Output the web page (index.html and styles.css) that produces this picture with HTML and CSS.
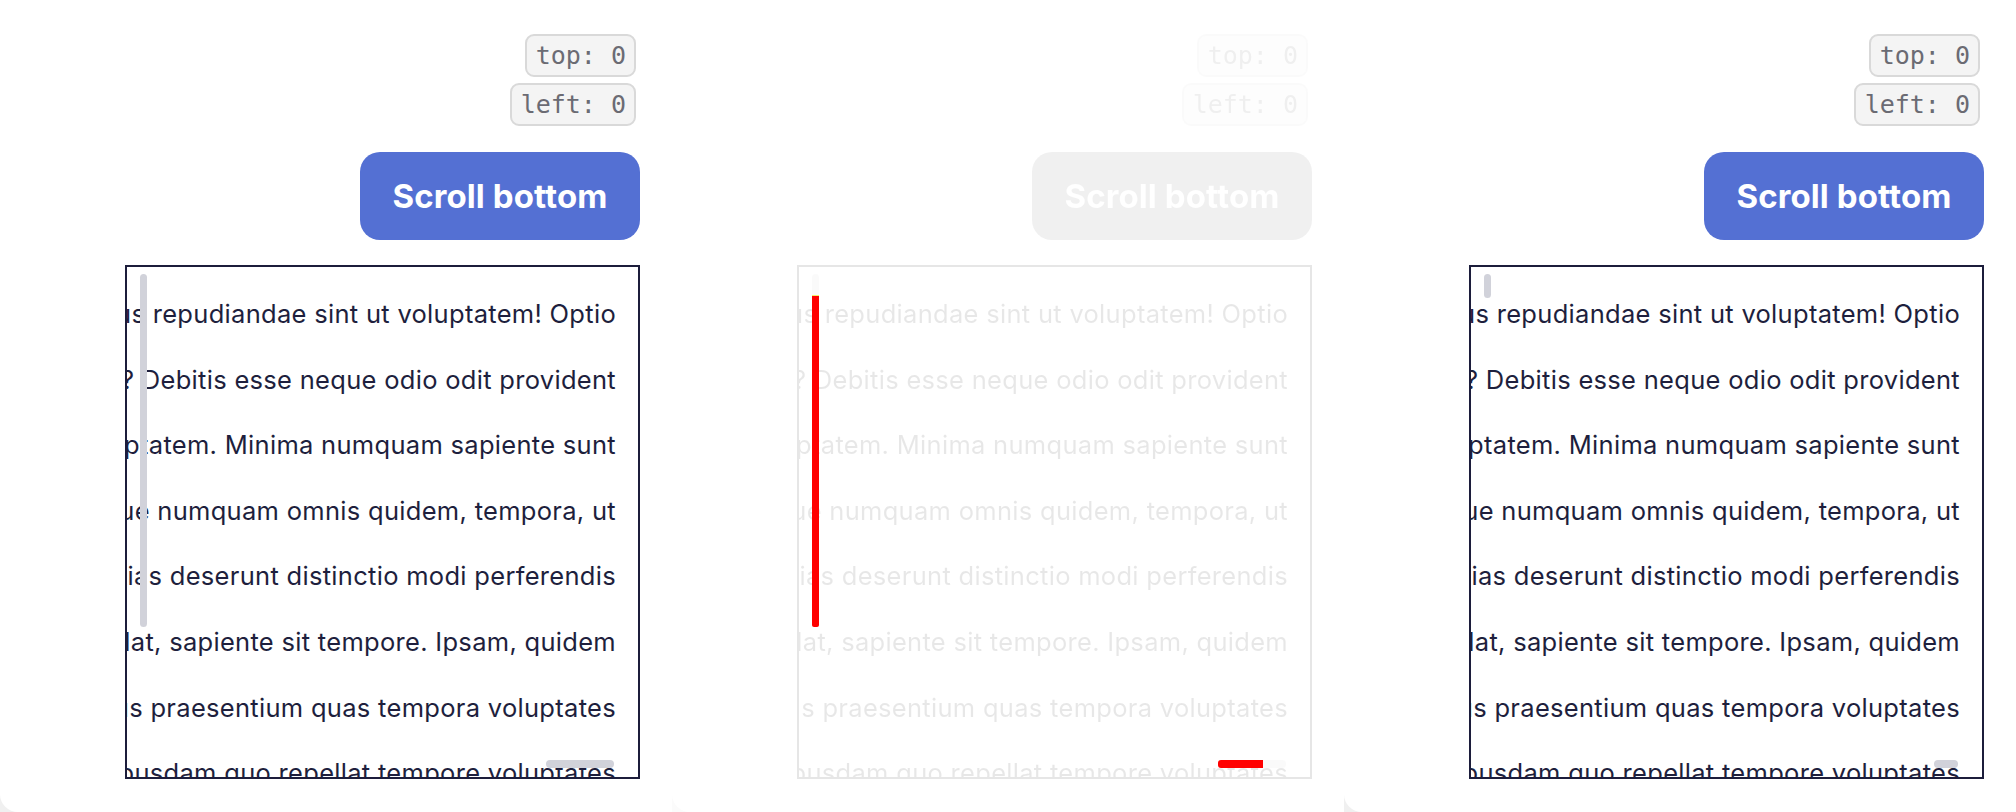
FILE: index.html
```html
<!DOCTYPE html>
<html>
<head>
<meta charset="utf-8">
<link rel="stylesheet" href="styles.css">
</head>
<body>
<main class="row">
  <div class="slot">
    <section class="card">
      <div class="badges">
        <span class="badge">top: 0</span>
        <span class="badge">left: 0</span>
      </div>
      <button class="btn">Scroll bottom</button>
      <div class="box">
        <div class="content">
          <div class="line"><span>Lorem ipsum dolor sit amet consectetur adipisicing elit. Quibusdam accusamus repudiandae sint ut voluptatem! Optio</span></div>
          <div class="line"><span>Nesciunt ratione tempora voluptatem ipsa quos? Debitis esse neque odio odit provident</span></div>
          <div class="line"><span>Eveniet facilis quod in officia aliquam voluptatem. Minima numquam sapiente sunt</span></div>
          <div class="line"><span>Aliquid quisquam ea atque numquam omnis quidem, tempora, ut</span></div>
          <div class="line"><span>Quasi dolorem molestias deserunt distinctio modi perferendis</span></div>
          <div class="line"><span>Nulla excepturi repellat, sapiente sit tempore. Ipsam, quidem</span></div>
          <div class="line"><span>Magnam voluptatibus praesentium quas tempora voluptates</span></div>
          <div class="line"><span>Iure nihil accusamus quibusdam quo repellat tempore voluptates</span></div>
        </div>
        <div class="thumb-v long"></div>
        <div class="thumb-h long"></div>
      </div>
    </section>
  </div>

  <div class="slot ghost-slot">
    <section class="card ghost">
      <div class="badges">
        <span class="badge">top: 0</span>
        <span class="badge">left: 0</span>
      </div>
      <button class="btn">Scroll bottom</button>
      <div class="box">
        <div class="content">
          <div class="line"><span>Lorem ipsum dolor sit amet consectetur adipisicing elit. Quibusdam accusamus repudiandae sint ut voluptatem! Optio</span></div>
          <div class="line"><span>Nesciunt ratione tempora voluptatem ipsa quos? Debitis esse neque odio odit provident</span></div>
          <div class="line"><span>Eveniet facilis quod in officia aliquam voluptatem. Minima numquam sapiente sunt</span></div>
          <div class="line"><span>Aliquid quisquam ea atque numquam omnis quidem, tempora, ut</span></div>
          <div class="line"><span>Quasi dolorem molestias deserunt distinctio modi perferendis</span></div>
          <div class="line"><span>Nulla excepturi repellat, sapiente sit tempore. Ipsam, quidem</span></div>
          <div class="line"><span>Magnam voluptatibus praesentium quas tempora voluptates</span></div>
          <div class="line"><span>Iure nihil accusamus quibusdam quo repellat tempore voluptates</span></div>
        </div>
        <div class="thumb-v long"></div>
        <div class="thumb-h long"></div>
        <div class="diff-v"></div>
        <div class="diff-h"></div>
      </div>
    </section>
  </div>

  <div class="slot">
    <section class="card">
      <div class="badges">
        <span class="badge">top: 0</span>
        <span class="badge">left: 0</span>
      </div>
      <button class="btn">Scroll bottom</button>
      <div class="box">
        <div class="content">
          <div class="line"><span>Lorem ipsum dolor sit amet consectetur adipisicing elit. Quibusdam accusamus repudiandae sint ut voluptatem! Optio</span></div>
          <div class="line"><span>Nesciunt ratione tempora voluptatem ipsa quos? Debitis esse neque odio odit provident</span></div>
          <div class="line"><span>Eveniet facilis quod in officia aliquam voluptatem. Minima numquam sapiente sunt</span></div>
          <div class="line"><span>Aliquid quisquam ea atque numquam omnis quidem, tempora, ut</span></div>
          <div class="line"><span>Quasi dolorem molestias deserunt distinctio modi perferendis</span></div>
          <div class="line"><span>Nulla excepturi repellat, sapiente sit tempore. Ipsam, quidem</span></div>
          <div class="line"><span>Magnam voluptatibus praesentium quas tempora voluptates</span></div>
          <div class="line"><span>Iure nihil accusamus quibusdam quo repellat tempore voluptates</span></div>
        </div>
        <div class="thumb-v short"></div>
        <div class="thumb-h short"></div>
      </div>
    </section>
  </div>
</main>
</body>
</html>
```
FILE: styles.css
```css
html, body {
  margin: 0;
  padding: 0;
  background: #ffffff;
  overflow: hidden;
}

.row {
  display: flex;
  width: 2016px;
  height: 812px;
}

.slot {
  width: 672px;
  height: 812px;
  background: #f0f0f0;
}
.ghost-slot {
  background: #fbfbfb;
}

.card {
  height: 812px;
  box-sizing: border-box;
  padding: 34px 32px 0 0;
  background: #ffffff;
  border-radius: 0 0 0 18px;
  display: flex;
  flex-direction: column;
  align-items: flex-end;
}

.badges {
  display: flex;
  flex-direction: column;
  align-items: flex-end;
  gap: 6px;
  padding-right: 4px;
}

.badge {
  display: block;
  font-family: "DejaVu Sans Mono", "Liberation Mono", monospace;
  font-size: 25px;
  line-height: 29px;
  color: #6b6b73;
  background: #f4f4f4;
  border: 2px solid #d9d9d9;
  border-radius: 9px;
  padding: 5px 8px 5px 9px;
}

.btn {
  margin-top: 26px;
  width: 280px;
  height: 88px;
  border: none;
  border-radius: 20px;
  background: #5470d3;
  color: #ffffff;
  font-family: Inter, "Noto Sans", sans-serif;
  font-weight: 700;
  font-size: 33px;
  letter-spacing: 0.1px;
  padding: 0;
}

.box {
  position: relative;
  margin-top: 25px;
  width: 515px;
  height: 514px;
  box-sizing: border-box;
  border: 2px solid #1c1d3b;
  overflow: hidden;
}

.content {
  padding: 14px 22px 0 0;
  font-family: Inter, "Noto Sans", sans-serif;
  font-size: 25.5px;
  letter-spacing: 0.3px;
  line-height: 65.6px;
  color: #1e1f3d;
}

.line {
  display: flex;
  justify-content: flex-end;
  white-space: nowrap;
  height: 65.6px;
}

.line span {
  flex: none;
}

.thumb-v {
  position: absolute;
  left: 13px;
  top: 7px;
  width: 7px;
  border-radius: 4px;
  background: #d1d2da;
}
.thumb-v.long { height: 353px; }
.thumb-v.short { height: 24px; }

.thumb-h {
  position: absolute;
  top: 493px;
  height: 8px;
  border-radius: 4px;
  background: #d1d2da;
}
.thumb-h.long { left: 419px; width: 68px; }
.thumb-h.short { left: 463px; width: 24px; }

/* faded diff panel */
.ghost .badge,
.ghost .btn,
.ghost .content,
.ghost .thumb-v,
.ghost .thumb-h {
  filter: grayscale(1);
  opacity: 0.1;
}
.ghost .box {
  border-color: #e6e6e6;
}

.diff-v {
  position: absolute;
  left: 13px;
  top: 29px;
  width: 7px;
  height: 331px;
  background: #ff0000;
  border-radius: 0 0 2px 2px;
  box-shadow: 0 -1px 0 #f4f06a;
}

.diff-h {
  position: absolute;
  left: 419px;
  top: 493px;
  width: 45px;
  height: 8px;
  background: #ff0000;
  border-radius: 3px 0 0 3px;
}
```
